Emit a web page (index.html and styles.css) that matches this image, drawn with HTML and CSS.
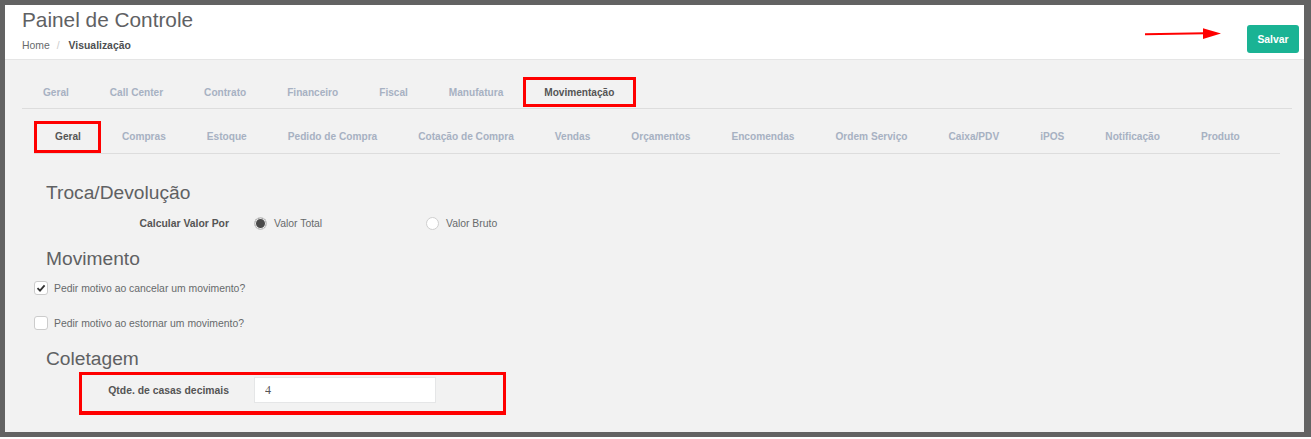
FILE: index.html
```html
<!DOCTYPE html>
<html>
<head>
  <meta charset="utf-8">
  <title>Painel de Controle</title>
  <link rel="stylesheet" href="styles.css">
</head>
<body>
  <div class="frame">

    <div class="header">
      <div class="header-left">
        <h2 class="page-title">Painel de Controle</h2>
        <div class="breadcrumb">
          <span>Home</span><span class="sep">/</span><strong>Visualização</strong>
        </div>
      </div>
      <button class="btn-save">Salvar</button>
    </div>

    <!-- seta de anotação -->
    <svg class="arrow" width="80" height="16" viewBox="0 0 80 16">
      <line x1="2" y1="7.2" x2="62" y2="6.3" stroke="#ff0000" stroke-width="2"/>
      <polygon points="60,1.3 78,6.5 60,12" fill="#ff0000"/>
    </svg>

    <div class="main">
      <ul class="tabs">
        <li><a>Geral</a></li>
        <li><a>Call Center</a></li>
        <li><a>Contrato</a></li>
        <li><a>Financeiro</a></li>
        <li><a>Fiscal</a></li>
        <li><a>Manufatura</a></li>
        <li class="active"><a>Movimentação</a><span class="mark mark-tab"></span></li>
      </ul>

      <div class="tab-content">
        <ul class="tabs sub-tabs">
          <li class="active"><a>Geral</a><span class="mark mark-sub"></span></li>
          <li><a>Compras</a></li>
          <li><a>Estoque</a></li>
          <li><a>Pedido de Compra</a></li>
          <li><a>Cotação de Compra</a></li>
          <li><a>Vendas</a></li>
          <li><a>Orçamentos</a></li>
          <li><a>Encomendas</a></li>
          <li><a>Ordem Serviço</a></li>
          <li><a>Caixa/PDV</a></li>
          <li><a>iPOS</a></li>
          <li><a>Notificação</a></li>
          <li><a>Produto</a></li>
        </ul>

        <h3 class="section-title">Troca/Devolução</h3>
        <div class="form-row radio-row">
          <label class="control-label">Calcular Valor Por</label>
          <div class="radio-group">
            <div class="radio-option"><span class="radio checked"></span>Valor Total</div>
            <div class="radio-option"><span class="radio"></span>Valor Bruto</div>
          </div>
        </div>

        <h3 class="section-title">Movimento</h3>
        <div class="check-row">
          <span class="checkbox">
            <svg width="10" height="10" viewBox="0 0 10 10"><path d="M1.5 5.2 L4 7.6 L8.6 2.4" fill="none" stroke="#333" stroke-width="1.8"/></svg>
          </span>
          Pedir motivo ao cancelar um movimento?
        </div>
        <div class="check-row">
          <span class="checkbox"></span>
          Pedir motivo ao estornar um movimento?
        </div>

        <h3 class="section-title">Coletagem</h3>
        <div class="form-row input-row">
          <label class="control-label">Qtde. de casas decimais</label>
          <input class="form-input" type="text" value="4">
          <span class="mark mark-row"></span>
        </div>
      </div>
    </div>

  </div>
</body>
</html>
```

FILE: styles.css
```css
    body {
      margin: 0;
      padding: 0;
      background-color: #ffffff;
      font-family: "Liberation Sans", Arial, sans-serif;
    }

    .frame {
      position: relative;
      width: 1299px;
      height: 427px;
      border: 5px solid #636363;
      border-right-width: 7px;
      overflow: hidden;
      background-color: #f2f2f2;
    }

    .header {
      display: flex;
      justify-content: space-between;
      padding: 3px 5px 0 17px;
      box-sizing: border-box;
      height: 55px;
      background-color: #ffffff;
      border-bottom: 1px solid #e5e5e5;
    }

    .page-title {
      margin: 0;
      font-size: 20.8px;
      line-height: 24px;
      font-weight: normal;
      color: #5f6163;
    }

    .breadcrumb {
      margin-top: 7px;
      font-size: 10.4px;
      line-height: 14px;
      color: #676a6c;
    }

    .breadcrumb .sep {
      color: #cccccc;
      padding: 0 9px 0 7px;
    }

    .breadcrumb strong {
      color: #4d4f51;
    }

    .btn-save {
      align-self: flex-start;
      margin-top: 17px;
      width: 52px;
      height: 28px;
      padding: 0;
      border: none;
      border-radius: 3px;
      background-color: #1ab394;
      color: #ffffff;
      font-family: "Liberation Sans", Arial, sans-serif;
      font-size: 10.4px;
      font-weight: bold;
    }

    .arrow {
      position: absolute;
      left: 1138px;
      top: 22px;
    }

    .main {
      padding: 17px 12px 0 17px;
    }

    .tabs {
      display: flex;
      margin: 0;
      padding: 0;
      list-style: none;
      border-bottom: 1px solid #dddddd;
    }

    .tabs li {
      position: relative;
    }

    .tabs a {
      display: block;
      padding: 0 20px 0 21px;
      line-height: 31px;
      font-size: 10.1px;
      font-weight: bold;
      color: #a7b1c2;
    }

    .tabs .active a {
      color: #555555;
    }

    .sub-tabs {
      margin-top: 12px;
    }

    .sub-tabs a {
      line-height: 32px;
      font-size: 10.14px;
    }

    .mark {
      position: absolute;
      border: 3px solid #ff0000;
      box-sizing: border-box;
    }

    .mark-tab {
      top: 0;
      bottom: 1px;
      left: 0;
      right: -2px;
    }

    .mark-sub {
      top: 0;
      bottom: 0;
      left: 0;
      right: 0;
    }

    .mark-row {
      left: 45px;
      top: -5px;
      width: 427px;
      height: 43px;
      border-width: 3px 3px 4px 3px;
    }

    .tab-content {
      padding: 0 12px 0 12px;
    }

    .section-title {
      margin: 15px 0 0;
      padding-left: 12px;
      font-size: 19.2px;
      line-height: 22px;
      font-weight: normal;
      color: #5f6163;
    }

    .sub-tabs + .section-title {
      margin-top: 28px;
    }

    .form-row {
      position: relative;
      display: grid;
      grid-template-columns: 195px 1fr;
      column-gap: 25px;
      align-items: center;
      margin-top: 8px;
    }

    .radio-row {
      margin-top: 9px;
      height: 20px;
    }

    .control-label {
      text-align: right;
      font-size: 10.4px;
      font-weight: bold;
      color: #555555;
    }

    .radio-group {
      display: flex;
    }

    .radio-option {
      display: flex;
      align-items: center;
      gap: 7px;
      width: 172px;
      font-size: 10.4px;
      color: #676a6c;
    }

    .radio {
      width: 13px;
      height: 13px;
      border: 1px solid #cfcfcf;
      border-radius: 50%;
      background-color: #ffffff;
      box-sizing: border-box;
    }

    .radio.checked {
      background-color: #4a4a4a;
      box-shadow: inset 0 0 0 1px #e8e8e8;
    }

    .check-row {
      display: flex;
      align-items: center;
      gap: 6px;
      height: 20px;
      margin-top: 8px;
      font-size: 10.4px;
      color: #676a6c;
    }

    .check-row + .check-row {
      margin-top: 15px;
    }

    .checkbox {
      display: flex;
      align-items: center;
      justify-content: center;
      width: 14px;
      height: 14px;
      border: 1px solid #cccccc;
      border-radius: 3px;
      background-color: #ffffff;
      box-sizing: border-box;
    }

    .input-row {
      margin-top: 7px;
    }

    .form-input {
      width: 182px;
      height: 26px;
      padding: 0 10px;
      box-sizing: border-box;
      border: 1px solid #e5e6e7;
      background-color: #ffffff;
      font-family: "Liberation Serif", serif;
      font-size: 12px;
      color: #555555;
      outline: none;
    }
```
